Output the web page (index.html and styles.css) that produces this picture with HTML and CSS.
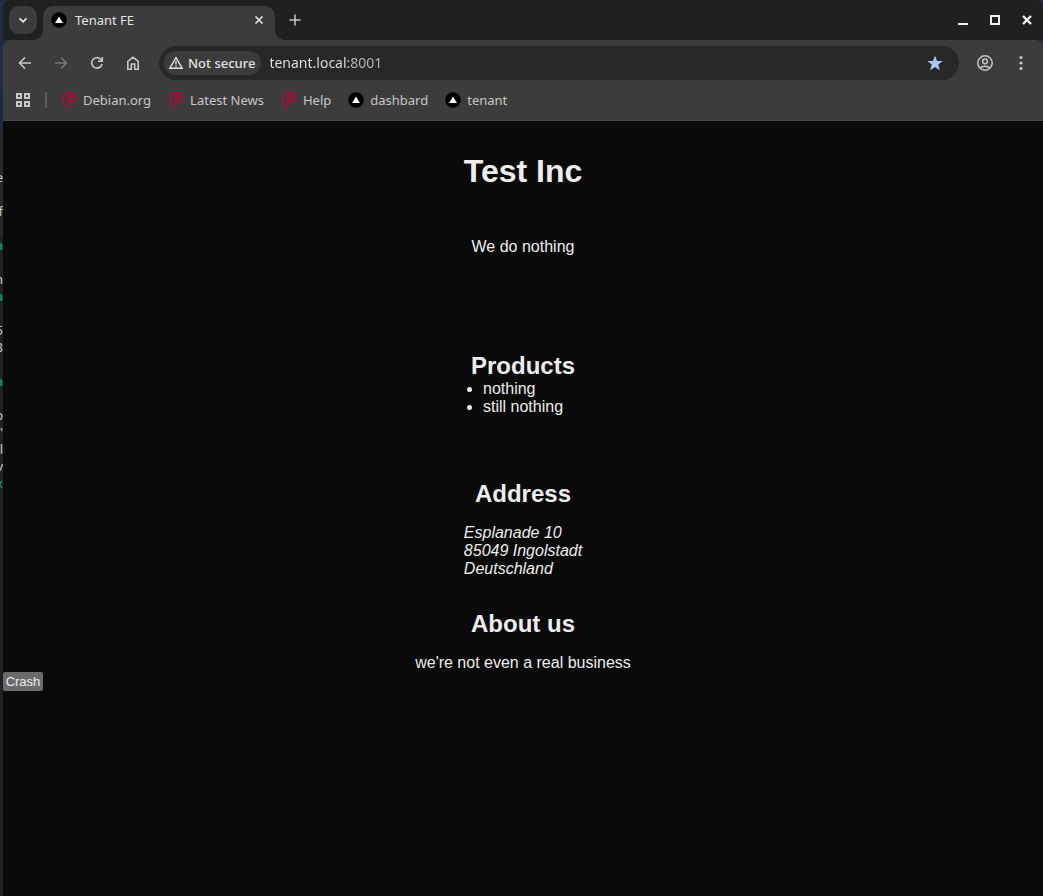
FILE: index.html
```html
<!DOCTYPE html>
<html lang="en">
<head>
<meta charset="utf-8">
<title>Tenant FE</title>
<link rel="stylesheet" href="styles.css">
</head>
<body>
<svg class="symbols" aria-hidden="true">
  <symbol id="swirl" viewBox="0 0 16 16">
    <path d="M10.600 5.600C9.600 4.500 7.500 4.900 6.900 6.400C6.200 8.400 7.900 10.200 10 9.600C12.700 9 14.200 6.800 13.700 4.600C12.700 1.500 9.500.200 6.500.900C3.300 1.700 1.300 4.700 1.700 8C2.100 11.300 4.200 14 7.500 15.500" fill="none" stroke="#c80036" stroke-width="1.700" stroke-dasharray="3 .2"/>
  </symbol>
  <symbol id="triangle" viewBox="0 0 16 16">
    <circle cx="8" cy="8" r="7.800" fill="#000"/><path d="M8 4.400L12 11H4Z" fill="#fff"/>
  </symbol>
</svg>
<div class="desktop">
  <div class="terminal" aria-hidden="true">
    <span>e</span><span></span><span>f</span><span></span><span class="green">a</span><span></span><span>n</span><span class="green">a</span><span></span><span>5</span><span>8</span><span></span><span class="green">a</span><span></span><span>o</span><span>"</span><span>l</span><span>v</span><span class="green">x</span>
  </div>
  <div class="browser">
    <header class="tabstrip">
      <button class="tab-search" aria-label="Search tabs"><svg width="16" height="16" viewBox="0 0 16 16"><path d="M4.500 6.300L8 9.800L11.500 6.300" stroke-width="1.800"/></svg></button>
      <div class="tab">
        <svg class="favicon"><use href="#triangle"/></svg>
        <span class="tab-title">Tenant FE</span>
        <button class="tab-close" aria-label="Close tab"><svg width="16" height="16" viewBox="0 0 16 16"><path d="M4.500 4.500L11.500 11.500M11.500 4.500L4.500 11.500" stroke-width="1.700"/></svg></button>
      </div>
      <button class="new-tab" aria-label="New tab"><svg width="16" height="16" viewBox="0 0 16 16"><path d="M8 2.500V13.500M2.500 8H13.500" stroke-width="1.500"/></svg></button>
      <div class="window-controls">
        <button aria-label="Minimize"><svg width="16" height="16" viewBox="0 0 16 16"><path d="M3 12H13" stroke-width="2"/></svg></button>
        <button aria-label="Maximize"><svg width="16" height="16" viewBox="0 0 16 16"><path d="M4 4H12V12H4Z" stroke-width="2"/></svg></button>
        <button aria-label="Close"><svg width="16" height="16" viewBox="0 0 16 16"><path d="M4 4L12 12M12 4L4 12" stroke-width="2.400"/></svg></button>
      </div>
    </header>
    <div class="chrome">
      <nav class="toolbar" aria-label="Navigation">
        <button aria-label="Back"><svg width="16" height="16" viewBox="0 0 16 16"><path d="M14 8H3M8 2.500L2.500 8L8 13.500" stroke-width="1.600"/></svg></button>
        <button class="dim" aria-label="Forward"><svg width="16" height="16" viewBox="0 0 16 16"><path d="M2 8H13M8 2.500L13.500 8L8 13.500" stroke-width="1.600"/></svg></button>
        <button aria-label="Reload"><svg width="16" height="16" viewBox="0 0 16 16"><path d="M13 9A5.200 5.200 0 1 1 11.700 4.300L13 5.700M13.300 2V6.300H9" stroke-width="1.600"/></svg></button>
        <button aria-label="Home"><svg width="16" height="16" viewBox="0 0 16 16"><path d="M2.800 6.300L8 2.200L13.200 6.300V14.200H9.700V9H6.300V14.200H2.800Z" stroke-width="1.600"/></svg></button>
        <div class="omnibox">
          <button class="security"><svg width="16" height="16" viewBox="0 0 16 16"><path d="M8 2.700L14.200 13.300H1.800Z" stroke-width="1.400"/><path d="M8 6.200V9.500M8 10.500V12" stroke-width="1.400"/></svg>Not secure</button>
          <input class="url" type="text" aria-label="Address" value="tenant.local:8001">
          <button class="star" aria-label="Edit bookmark"><svg width="18" height="18" viewBox="0 0 18 18"><path d="M9 1.500L11 7H16.800L12.200 10.600L13.900 16.300L9 12.900L4.100 16.300L5.800 10.600L1.200 7H7Z"/></svg></button>
        </div>
        <button aria-label="Profile"><svg width="18" height="18" viewBox="0 0 18 18"><circle cx="9" cy="9" r="7.200" stroke-width="1.500"/><circle cx="9" cy="7.300" r="2.400" stroke-width="1.500"/><path d="M4 14C6.500 11.600 11.500 11.600 14 14" stroke-width="1.500"/></svg></button>
        <button aria-label="Menu"><svg class="solid" width="16" height="16" viewBox="0 0 16 16"><circle cx="8" cy="2.500" r="1.600"/><circle cx="8" cy="8" r="1.600"/><circle cx="8" cy="13.500" r="1.600"/></svg></button>
      </nav>
      <nav class="bookmarks" aria-label="Bookmarks">
        <button class="apps" aria-label="Tab groups"><svg width="16" height="16" viewBox="0 0 16 16"><path d="M2 2H6V6H2ZM10 2H14V6H10ZM2 10H6V14H2ZM10 10H14V14H10Z" stroke-width="2"/></svg></button>
        <span class="divider"></span>
        <a href="#"><svg class="favicon"><use href="#swirl"/></svg>Debian.org</a>
        <a href="#"><svg class="favicon"><use href="#swirl"/></svg>Latest News</a>
        <a href="#"><svg class="favicon"><use href="#swirl"/></svg>Help</a>
        <a href="#"><svg class="favicon"><use href="#triangle"/></svg>dashbard</a>
        <a href="#"><svg class="favicon"><use href="#triangle"/></svg>tenant</a>
      </nav>
    </div>
    <main class="page">
      <h1>Test Inc</h1>
      <p class="intro">We do nothing</p>
      <section class="products">
        <h2>Products</h2>
        <ul><li>nothing</li><li>still nothing</li></ul>
      </section>
      <section class="block">
        <h2>Address</h2>
        <address>Esplanade 10<br>85049 Ingolstadt<br>Deutschland</address>
      </section>
      <section class="block">
        <h2>About us</h2>
        <p>we're not even a real business</p>
      </section>
      <button class="crash">Crash</button>
    </main>
  </div>
</div>
</body>
</html>
```
FILE: styles.css
```css
* { box-sizing: border-box; margin: 0; padding: 0; }
body { background: #1f2223; }
button { border: 0; background: none; color: inherit; font: inherit; }
svg { fill: none; stroke: currentColor; flex: none; display: block; }
.solid { fill: currentColor; stroke: none; }
.symbols { position: absolute; width: 0; height: 0; }
.favicon { width: 16px; height: 16px; stroke: none; }

.desktop {
  position: relative;
  min-height: 100vh;
  padding-left: 3px;
  background: linear-gradient(#252c42, #202b3e 130px, #252a2e 131px, #252a2e 235px, #1f2223 236px);
}
/* Edge of the terminal window that sits behind the browser */
.terminal {
  position: absolute;
  left: 0;
  top: 169px;
  width: 3px;
  overflow: hidden;
  direction: rtl;
  color: #c8c8c8;
  font: 13px/17px "Noto Sans", sans-serif;
}
.terminal span { display: block; height: 17px; }
.terminal .green { color: #1fae7a; }

.browser {
  display: flex;
  flex-direction: column;
  min-height: 100vh;
  color: #c7c7c7;
  font: 13px/18px "Noto Sans", sans-serif;
}
.tabstrip {
  display: flex;
  align-items: center;
  height: 40px;
  padding-left: 6px;
  background: #1f2120;
  border-radius: 8px 8px 0 0;
}
.tab-search {
  display: grid;
  place-items: center;
  width: 28px;
  height: 28px;
  border-radius: 10px;
  background: #3c3c3c;
  color: #e3e3e3;
}
.tab {
  position: relative;
  display: flex;
  align-items: center;
  gap: 8px;
  align-self: flex-end;
  width: 232px;
  height: 34px;
  margin-left: 6px;
  padding: 0 8px 6px;
  border-radius: 10px 10px 0 0;
  background: #3c3c3c;
  color: #e3e3e3;
}
.tab::before, .tab::after {
  content: "";
  position: absolute;
  bottom: 0;
  width: 10px;
  height: 10px;
}
.tab::before { right: 100%; background: radial-gradient(circle at 0 0, transparent 10px, #3c3c3c 10px); }
.tab::after { left: 100%; background: radial-gradient(circle at 100% 0, transparent 10px, #3c3c3c 10px); }
.tab-title { flex: 1; }
.new-tab { margin-left: 12px; }
.window-controls { display: flex; gap: 16px; margin-left: auto; padding-right: 8px; color: #f1f1f5; }

.chrome {
  background: #3c3c3c;
  border-bottom: 1px solid #4a4a4a;
  border-radius: 8px 8px 0 0;
}
.toolbar { display: flex; align-items: center; height: 46px; padding: 0 4px; }
.toolbar > button { display: grid; place-items: center; width: 36px; height: 34px; }
.toolbar > .dim { color: #787878; }
.omnibox {
  display: flex;
  align-items: center;
  flex: 1;
  min-width: 0;
  height: 34px;
  margin: 0 8px;
  padding: 0 15px 0 5px;
  border-radius: 17px;
  background: #282828;
}
.security {
  display: flex;
  align-items: center;
  gap: 4px;
  height: 24px;
  padding: 0 6px 0 4px;
  border-radius: 12px;
  background: #3c3c3c;
  color: #e3e3e3;
  font-weight: 500;
  white-space: nowrap;
}
.url {
  flex: 1;
  min-width: 0;
  margin-left: 8px;
  border: 0;
  outline: 0;
  background: linear-gradient(90deg, #e3e3e3 79px, #b8b8b8 79px);
  background-clip: text;
  color: transparent;
  font: 14px/20px "Noto Sans", sans-serif;
}
.star svg { fill: #a8c7fa; stroke: none; }

.bookmarks { display: flex; align-items: center; height: 34px; padding: 0 12px 6px; }
.bookmarks a { display: flex; align-items: center; gap: 6px; margin-right: 17px; color: inherit; text-decoration: none; }
.divider { width: 2px; height: 16px; margin: 0 14px; background: #5c5c5c; }

.page {
  display: flex;
  flex: 1;
  flex-direction: column;
  align-items: center;
  padding-top: 32px;
  background: #0a0a0a;
  color: #ededed;
  font: 16px/18px "Liberation Sans", Arial, sans-serif;
}
h1 { font-size: 32px; line-height: 36px; }
h2 { font-size: 24px; line-height: 28px; text-align: center; }
.intro { margin-top: 49px; }
.products { margin: 96px 0 32px; }
.products ul { padding-left: 12px; }
.block { display: flex; flex-direction: column; align-items: center; gap: 16px; margin-top: 32px; }
.crash {
  align-self: flex-start;
  min-width: 40px;
  padding: 2px;
  border-radius: 2px;
  background: #6b6b6b;
  font-size: 13px;
  line-height: 15px;
}
```
